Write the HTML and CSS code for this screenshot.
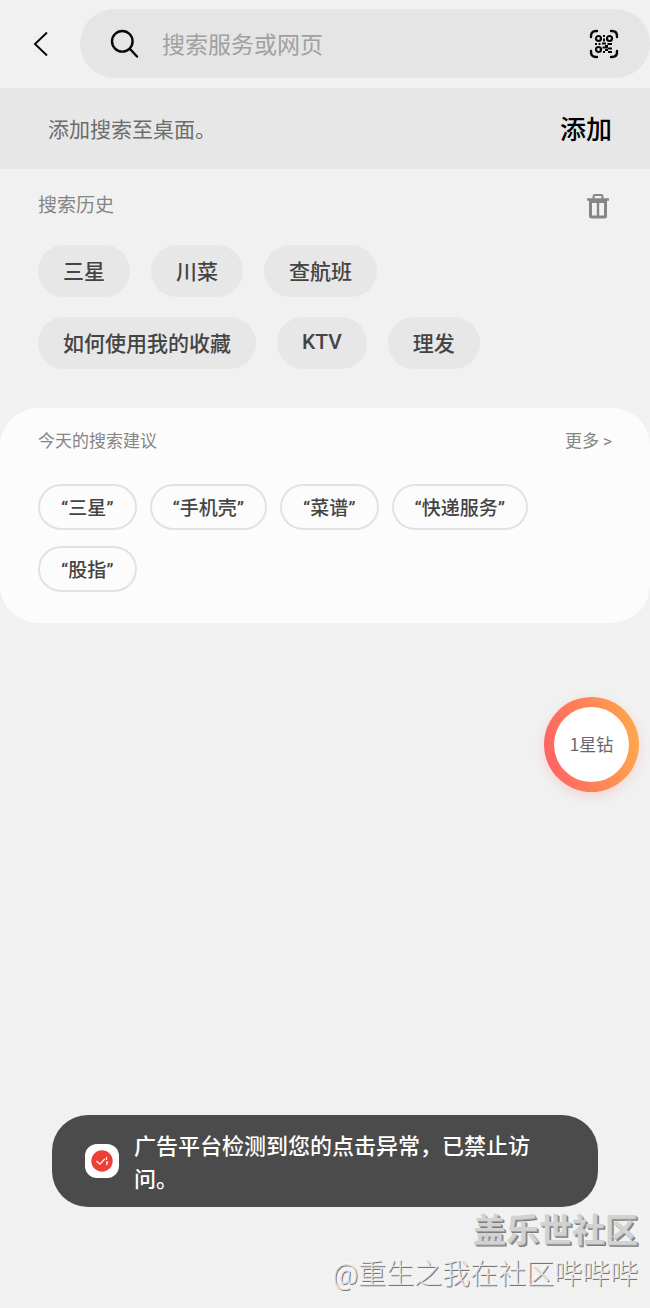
FILE: index.html
```html
<!DOCTYPE html>
<html lang="zh-CN">
<head>
<meta charset="utf-8">
<meta name="viewport" content="width=device-width, initial-scale=1">
<title>搜索</title>
<link rel="stylesheet" href="styles.css">
</head>
<body>
<div class="page">
  <header class="topbar">
    <button class="back" type="button" aria-label="返回">
      <svg width="16" height="26" viewBox="0 0 16 26" fill="none" stroke="#0c0c0c" stroke-width="2"><path d="M15 1.500 3 13l12 11.500"/></svg>
    </button>
    <form class="search" role="search">
      <svg width="30" height="30" viewBox="0 0 30 30" fill="none" stroke="#080808" stroke-width="2.4" stroke-linecap="round"><circle cx="12.300" cy="12.300" r="10.300"/><path d="m20 20 7 7.500"/></svg>
      <input class="search-input" type="search" aria-label="搜索" placeholder="搜索服务或网页">
      <button class="scan" type="button" aria-label="扫码">
        <svg width="30" height="30" viewBox="0 0 30 30" fill="none" stroke="#080808">
          <path stroke-width="2.400" stroke-linecap="round" d="M2 8V7q0-5 5-5h1M22 2h1q5 0 5 5v1M28 22v1q0 5-5 5h-1M8 28H7q-5 0-5-5v-1"/>
          <g stroke-width="2.200"><circle cx="9.500" cy="9.500" r="2.500"/><circle cx="20.500" cy="9.500" r="2.500"/><circle cx="9.500" cy="20.500" r="2.500"/></g>
          <path fill="#080808" stroke="none" d="M14 6h2v2h-2zM14 9.500h2v3h-2zM6 14h2v2H6zM9.500 14h2v2h-2zM13 13.500h4v2h-4zM18.500 14h4.500v2h-4.500zM16 16h3v3h-3zM13.500 17.500h2.500v2h-2.500zM19 18.500h4v2h-4zM16 19.500h3v2.500h-3zM14 22h2v2h-2zM19 22h4v2h-4z"/>
        </svg>
      </button>
    </form>
  </header>

  <section class="banner">
    <p class="banner-text">添加搜索至桌面。</p>
    <button class="banner-add" type="button">添加</button>
  </section>

  <section class="history">
    <div class="section-head">
      <h2 class="history-title">搜索历史</h2>
      <button class="trash" type="button" aria-label="清空搜索历史">
        <svg width="24" height="26" viewBox="0 0 24 26" fill="none" stroke="#858585">
          <path stroke-width="2" d="M7.500 6V3.500Q7.500 2 9 2h6q1.500 0 1.500 1.500V6"/>
          <path stroke-width="2.400" d="M1 6.500h22"/>
          <path stroke-width="3" d="M4.500 7v16q0 1 1 1h13q1 0 1-1V7"/>
          <path stroke-width="2.400" d="M12 7v17"/>
          <path stroke-width="3" d="M4 8.500h16"/>
        </svg>
      </button>
    </div>
    <div class="history-chips">
      <button class="chip" type="button">三星</button>
      <button class="chip" type="button">川菜</button>
      <button class="chip" type="button">查航班</button>
      <button class="chip" type="button">如何使用我的收藏</button>
      <button class="chip" type="button">KTV</button>
      <button class="chip" type="button">理发</button>
    </div>
  </section>

  <section class="suggest">
    <div class="section-head">
      <h2 class="suggest-title">今天的搜索建议</h2>
      <a class="more" href="#more">更多 &gt;</a>
    </div>
    <div class="suggest-chips">
      <button class="pill" type="button">“三星”</button>
      <button class="pill" type="button">“手机壳”</button>
      <button class="pill" type="button">“菜谱”</button>
      <button class="pill" type="button">“快递服务”</button>
      <button class="pill" type="button">“股指”</button>
    </div>
  </section>

  <button class="reward" type="button"><span class="reward-label">1星钻</span></button>

  <footer class="bottom">
    <div class="toast" role="status">
      <svg class="toast-icon" width="34" height="34" viewBox="0 0 34 34" fill="none">
        <rect width="34" height="34" rx="12" fill="#fff"/>
        <circle cx="17" cy="17" r="10.700" fill="#ec4034"/>
        <path d="m11.500 17 3.300 3.200 5-5.200M21.500 13v3M21 18h1.500l-1 3" stroke="#fff" stroke-width="1.200"/>
      </svg>
      <p class="toast-text">广告平台检测到您的点击异常，已禁止访问。</p>
    </div>
    <div class="watermark">
      <p class="watermark-site">盖乐世社区</p>
      <p class="watermark-user">@重生之我在社区哔哔哔</p>
    </div>
  </footer>
</div>
</body>
</html>
```
FILE: styles.css
```css
* { box-sizing: border-box; }

body, p, h2 { margin: 0; }

body, button, input {
  font-family: Roboto, "Noto Sans CJK SC", sans-serif;
}

button {
  padding: 0;
  border: 0;
  background: none;
  color: inherit;
}

svg { display: block; flex: none; }

.page {
  position: relative;
  display: flex;
  flex-direction: column;
  min-height: 100vh;
  background: #f1f1f1;
  color: #444;
}

.topbar {
  display: flex;
  align-items: center;
  padding: 9px 0 10px;
}

.back {
  display: flex;
  align-items: center;
  justify-content: center;
  width: 80px;
  height: 69px;
}

.search {
  flex: 1;
  display: flex;
  align-items: center;
  height: 69px;
  padding: 0 31px 0 30px;
  border-radius: 35px;
  background: #e5e5e5;
}

.search-input {
  flex: 1;
  min-width: 0;
  margin: 0 22px;
  padding: 4px 0 0;
  border: 0;
  background: none;
  font-size: 23px;
  line-height: 34px;
  outline: 0;
}

.search-input::placeholder { color: #a0a0a0; opacity: 1; }

.banner {
  display: flex;
  align-items: center;
  justify-content: space-between;
  height: 81px;
  padding: 0 38px 2px 48px;
  background: #e7e7e7;
}

.banner-text { font-size: 21px; color: #6c6c6c; }

.banner-add { font-size: 26px; font-weight: 500; color: #000; }

.history { padding: 21px 38px 39px; }

.section-head {
  display: flex;
  align-items: center;
  justify-content: space-between;
}

.history-title {
  font-size: 19px;
  font-weight: 400;
  line-height: 32px;
  color: #858585;
}

.trash { padding: 0 2px; }

.history-chips {
  display: flex;
  flex-wrap: wrap;
  gap: 20px 21px;
  margin-top: 23px;
}

.chip {
  height: 52px;
  padding: 0 25px 2px;
  border-radius: 26px;
  background: #e7e7e7;
  font-size: 21px;
  font-weight: 500;
}

.suggest {
  padding: 18px 38px 31px;
  border-radius: 38px;
  background: #fcfcfc;
}

.suggest-title, .more {
  font-size: 17px;
  font-weight: 400;
  line-height: 30px;
  color: #858585;
  text-decoration: none;
}

.suggest-chips {
  display: flex;
  flex-wrap: wrap;
  gap: 16px 13px;
  margin-top: 28px;
}

.pill {
  height: 46px;
  padding: 0 21px 1px;
  border: 2px solid #e2e2e2;
  border-radius: 23px;
  font-size: 19px;
  font-weight: 500;
}

.reward {
  position: absolute;
  top: 697px;
  right: 11px;
  width: 95px;
  height: 95px;
  padding: 10px;
  border-radius: 50%;
  background: linear-gradient(80deg, #ff5f66, #ff8058 45%, #ffac4c);
  box-shadow: 0 4px 12px rgba(255, 100, 90, 0.2);
}

.reward-label {
  display: flex;
  align-items: center;
  justify-content: center;
  height: 100%;
  padding-bottom: 2px;
  border-radius: 50%;
  background: #fff;
  font-family: "Noto Sans CJK SC", sans-serif;
  font-size: 17px;
  color: #67676d;
}

.bottom {
  margin-top: auto;
  padding: 0 12px 13px;
}

.toast {
  display: flex;
  align-items: center;
  gap: 15px;
  margin: 0 40px;
  padding: 13px 48px 13px 33px;
  border-radius: 36px;
  background: #4b4b4b;
}

.toast-text {
  padding-top: 2px;
  margin-bottom: -2px;
  font-size: 22px;
  font-weight: 500;
  line-height: 33px;
  color: #fff;
}

.watermark {
  text-align: right;
  color: #d2d2d2;
}

.watermark-site {
  font-size: 33px;
  font-weight: 700;
  line-height: 48px;
  text-shadow: 1px 1px 0 #a0a0a0, 2px 2px 0 #7c7c7c;
}

.watermark-user {
  font-size: 28px;
  font-weight: 300;
  line-height: 40px;
  color: #e4e4e4;
  text-shadow: 1px 1px 0 #777, -1px -1px 0 #fafafa;
}
```
